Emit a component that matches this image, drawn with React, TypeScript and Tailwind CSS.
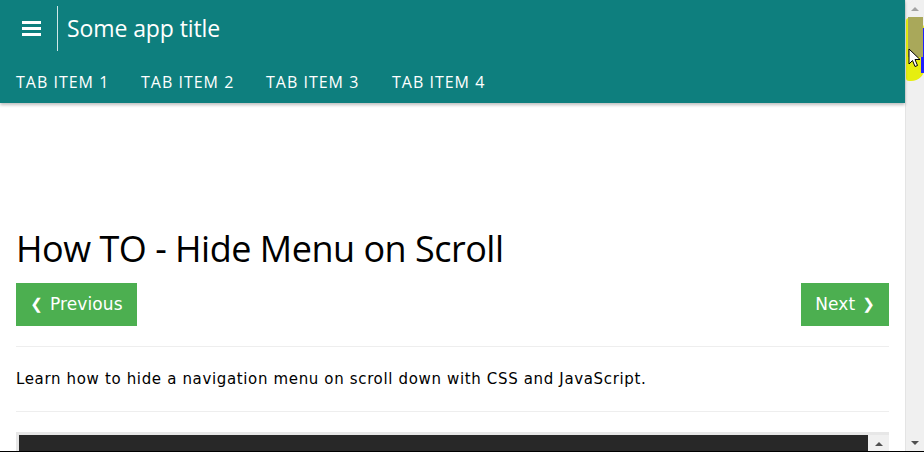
function Header() {
  return (
    <div className="bg-[#0e7f7e] text-white shadow-[0_2px_3px_rgba(0,0,0,0.25)] relative z-10">
      <div className="flex items-center h-[57px]">
        <div className="w-[57px] h-full flex items-center justify-center">
          <div className="flex flex-col gap-[3px] ml-[6px]">
            <span className="block w-[19px] h-[3px] bg-white" />
            <span className="block w-[19px] h-[3px] bg-white" />
            <span className="block w-[19px] h-[3px] bg-white" />
          </div>
        </div>
        <div className="w-px h-[45px] bg-[#cfe8e8]" />
        <div className="pl-[9px] text-[23px] font-['Open_Sans',sans-serif] tracking-[-0.1px]">Some app title</div>
      </div>
      <ul className="flex h-[46px] items-center pl-[16px] text-[16px] font-['Open_Sans',sans-serif] tracking-[1px] pt-[3px]">
        <li className="w-[125px]">TAB ITEM 1</li>
        <li className="w-[125px]">TAB ITEM 2</li>
        <li className="w-[126px]">TAB ITEM 3</li>
        <li>TAB ITEM 4</li>
      </ul>
    </div>
  );
}

function Scrollbar() {
  return (
    <div className="w-[19px] h-full bg-[#f0f0f0] border-l border-[#e4e4e4] flex flex-col items-center relative">
      <div className="absolute left-0 top-[18px] w-[19px] h-[63px] rounded-r-[14px] rounded-l-[3px] bg-[#e6ee10]" />
      <div className="absolute right-0 top-[28px] w-[3px] h-[45px] bg-[#2020ff]" />
      <div className="h-[17px] w-full flex items-center justify-center relative">
        <span className="block w-0 h-0 border-l-[4px] border-r-[4px] border-b-[4px] border-l-transparent border-r-transparent border-b-[#a3a3a3]" />
      </div>
      <div className="w-[15px] h-[40px] bg-[#a9a85a] relative" />
      <div className="flex-1" />
      <div className="h-[17px] w-full flex items-center justify-center">
        <span className="block w-0 h-0 border-l-[4px] border-r-[4px] border-t-[4px] border-l-transparent border-r-transparent border-t-[#505050]" />
      </div>
      <svg className="absolute left-[2px] top-[48px]" width="14" height="22" viewBox="0 0 14 22">
        <path d="M1 1 L1 16 L4.5 12.5 L7 18.5 L9.5 17.5 L7 11.5 L12 11.5 Z" fill="white" stroke="black" strokeWidth="1" />
      </svg>
    </div>
  );
}

function CodeBox() {
  return (
    <div className="mt-[20px] bg-[#e7e7e7] pt-[3px] pl-[3px] flex">
      <div className="flex-1 bg-[#282828] h-[40px]" />
      <div className="w-[21px] bg-[#f0f0f0] flex justify-center pt-[7px]">
        <span className="block w-0 h-0 border-l-[4px] border-r-[4px] border-b-[4px] border-l-transparent border-r-transparent border-b-[#505050]" />
      </div>
    </div>
  );
}

export default function App() {
  return (
    <div className="w-[924px] h-[452px] overflow-hidden flex bg-white border-b border-black">
      <div className="flex-1 flex flex-col">
        <Header />
        <div className="px-[16px]">
          <h1 className="mt-[124px] text-[36px] leading-[44px] font-['Open_Sans',sans-serif] text-black tracking-[-0.5px]">How TO - Hide Menu on Scroll</h1>
          <div className="flex justify-between mt-[12px] font-['DejaVu_Sans',sans-serif] text-[17px] text-white">
            <button className="bg-[#4caf50] h-[43px] w-[121px] flex items-center justify-center gap-[7px] tracking-[0.1px]">
              <span className="text-[15px] font-bold">❮</span>
              <span>Previous</span>
            </button>
            <button className="bg-[#4caf50] h-[43px] w-[88px] flex items-center justify-center gap-[7px] tracking-[0.1px]">
              <span>Next</span>
              <span className="text-[15px] font-bold">❯</span>
            </button>
          </div>
          <hr className="mt-[20px] border-0 border-t border-[#eeeeee]" />
          <p className="py-[22px] text-[15px] leading-[20px] font-['DejaVu_Sans',sans-serif] text-black tracking-[0.65px]">
            Learn how to hide a navigation menu on scroll down with CSS and JavaScript.
          </p>
          <hr className="border-0 border-t border-[#eeeeee]" />
          <CodeBox />
        </div>
      </div>
      <Scrollbar />
    </div>
  );
}
